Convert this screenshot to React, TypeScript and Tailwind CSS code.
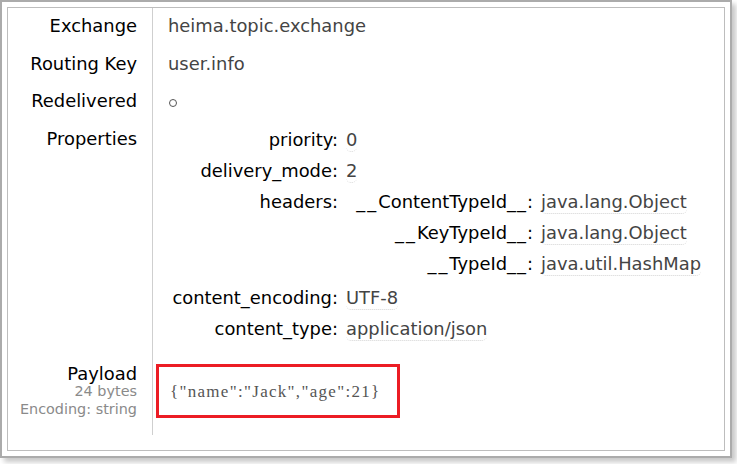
const rows = [
  { label: "Exchange", value: "heima.topic.exchange" },
  { label: "Routing Key", value: "user.info" },
];

const headers = [
  { name: "ContentTypeId", value: "java.lang.Object" },
  { name: "KeyTypeId", value: "java.lang.Object" },
  { name: "TypeId", value: "java.util.HashMap" },
];

const Val = ({ children }: { children: React.ReactNode }) => (
  <span className="text-[#444] border-b border-dotted border-[#d4d4d4] rounded-[5px] pb-[1px]">
    {children}
  </span>
);

const PropRow = ({ k, children }: { k: string; children: React.ReactNode }) => (
  <div className="flex h-[31px]">
    <div className="w-[185px] text-right text-black">{k}</div>
    <div className="pl-2">{children}</div>
  </div>
);

const App = () => {
  return (
    <div className="w-[737px] h-[464px] bg-white">
      <div
        className="w-[732px] h-[458px] border-2 border-[#ababab] bg-white p-[5px] shadow-[4px_4px_5px_rgba(0,0,0,0.22)]"
        style={{ fontFamily: '"DejaVu Sans", Verdana, sans-serif' }}
      >
        <div className="h-full border border-[#bdbdbd] text-[17.9px] leading-[22px]">
          {rows.map((r) => (
            <div key={r.label} className="flex h-[37.5px]">
              <div className="w-[145px] shrink-0 pt-[7px] pr-[15px] text-right text-black border-r border-[#cfcfcf]">
                {r.label}
              </div>
              <div className="pt-[7px] pl-[15px] text-[#444]">{r.value}</div>
            </div>
          ))}
          <div className="flex h-[37.5px]">
            <div className="w-[145px] shrink-0 pt-[7px] pr-[15px] text-right text-black border-r border-[#cfcfcf]">
              Redelivered
            </div>
            <div className="pt-[7px] pl-[16px] text-[#444]">
              <span className="inline-block w-[8px] h-[8px] rounded-full border border-[#555]" />
            </div>
          </div>
          <div className="flex h-[228.5px]">
            <div className="w-[145px] shrink-0 pt-[7px] pr-[15px] text-right text-black border-r border-[#cfcfcf]">
              Properties
            </div>
            <div className="pt-[8.5px]">
              <PropRow k="priority:">
                <Val>0</Val>
              </PropRow>
              <PropRow k="delivery_mode:">
                <Val>2</Val>
              </PropRow>
              <div className="flex h-[96px]">
                <div className="w-[185px] text-right text-black">headers:</div>
                <div>
                  {headers.map((h) => (
                    <div key={h.name} className="flex h-[31px]">
                      <div className="w-[195px] text-right text-black">
                        <span className="tracking-[2px]">__</span>
                        {h.name}
                        <span className="tracking-[1px]">__</span>:
                      </div>
                      <div className="pl-2">
                        <Val>{h.value}</Val>
                      </div>
                    </div>
                  ))}
                </div>
              </div>
              <PropRow k="content_encoding:">
                <Val>UTF-8</Val>
              </PropRow>
              <PropRow k="content_type:">
                <Val>application/json</Val>
              </PropRow>
            </div>
          </div>
          <div className="flex h-[86px]">
            <div className="w-[145px] shrink-0 pt-[15px] pr-[15px] text-right border-r border-[#cfcfcf]">
              <div className="leading-[20px] text-black">Payload</div>
              <div className="-mt-[2px] text-[14.4px] leading-[18px] text-[#8a8a8a]">24 bytes</div>
              <div className="text-[14.4px] leading-[18px] text-[#8a8a8a]">Encoding: string</div>
            </div>
            <div className="pt-[15px] pl-[3px]">
              <div className="w-[244px] h-[54px] border-[3px] border-[#ec1c24] flex items-center pl-[11px] pt-[2px]">
                <span
                  className="text-[17px] tracking-[1.3px] text-[#555]"
                  style={{ fontFamily: '"Liberation Serif", "Times New Roman", serif' }}
                >
                  {'{"name":"Jack","age":21}'}
                </span>
              </div>
            </div>
          </div>
        </div>
      </div>
    </div>
  );
};

export default App;
